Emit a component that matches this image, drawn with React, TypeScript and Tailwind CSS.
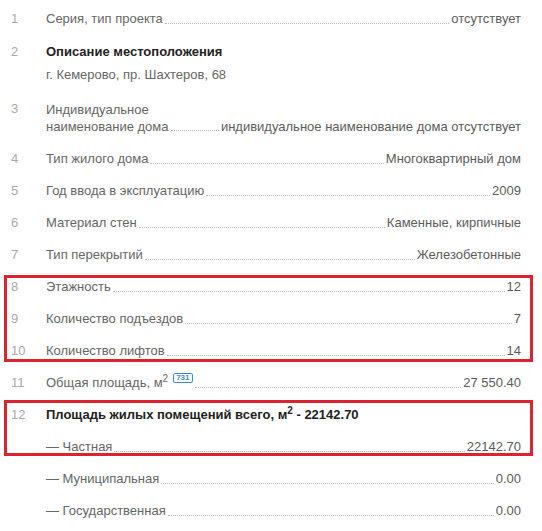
import React from "react";

type RowProps = {
  num?: string;
  label: React.ReactNode;
  value: React.ReactNode;
  labelClass?: string;
  leading?: string;
  dotsMb?: string;
};

function Row({ num, label, value, labelClass = "", leading = "leading-4", dotsMb = "mb-[3px]" }: RowProps) {
  return (
    <div className={`flex py-2 pl-[11px] pr-[21px] ${leading}`}>
      <div className="w-[35px] shrink-0 leading-4 text-[#aaaaaa]">{num}</div>
      <div className="flex min-w-0 flex-1 items-end">
        <div className={`text-[#666666] ${labelClass}`}>{label}</div>
        <div className={`mx-[2px] min-w-[8px] flex-1 border-b border-dotted border-[#b8b8b8] ${dotsMb}`} />
        <div className="whitespace-nowrap text-[#5c5c5c]">{value}</div>
      </div>
    </div>
  );
}

function Highlight({ children, top, bottom }: { children: React.ReactNode; top: string; bottom: string }) {
  return (
    <div className="relative">
      {children}
      <div className={`pointer-events-none absolute left-[4px] right-[9px] border-[3px] border-[#dc2430] ${top} ${bottom}`} />
    </div>
  );
}

export default function App() {
  return (
    <div
      className="min-h-[531px] w-[542px] bg-white pt-[3px] text-[13px]"
      style={{ fontFamily: '"Liberation Sans", Arial, sans-serif' }}
    >
      <Row num="1" label="Серия, тип проекта" value="отсутствует" />

      <div className="flex pb-[10px] pl-[11px] pr-[21px] pt-[9px] leading-4">
        <div className="w-[35px] shrink-0 text-[#aaaaaa]">2</div>
        <div className="flex flex-col">
          <div className="font-bold text-[#222222]">Описание местоположения</div>
          <div className="mt-[7px] text-[#666666]">г. Кемерово, пр. Шахтеров, 68</div>
        </div>
      </div>

      <Row
        num="3"
        label={
          <>
            Индивидуальное
            <br />
            наименование дома
          </>
        }
        labelClass="whitespace-nowrap"
        leading="leading-[17px]"
        dotsMb="mb-[4px]"
        value="индивидуальное наименование дома отсутствует"
      />
      <Row num="4" label="Тип жилого дома" value="Многоквартирный дом" />
      <Row num="5" label="Год ввода в эксплуатацию" value="2009" />
      <Row num="6" label="Материал стен" value="Каменные, кирпичные" />
      <Row num="7" label="Тип перекрытий" value="Железобетонные" />

      <Highlight top="top-[4px]" bottom="bottom-[5px]">
        <Row num="8" label="Этажность" value="12" />
        <Row num="9" label="Количество подъездов" value="7" />
        <Row num="10" label="Количество лифтов" value="14" />
      </Highlight>

      <Row
        num="11"
        label={
          <span className="whitespace-nowrap">
            Общая площадь, м<sup className="text-[10px]">2</sup>
            <span className="relative -top-[7px] ml-[5px] inline-block rounded-[2px] border border-[#3b8fd0] px-[2px] align-baseline text-[8px] font-bold leading-[8px] text-[#3b8fd0]">
              731
            </span>
          </span>
        }
        value="27 550.40"
      />

      <Highlight top="top-[1px]" bottom="bottom-[7px]">
        <div className="flex py-2 pl-[11px] pr-[21px] leading-4">
          <div className="w-[35px] shrink-0 text-[#aaaaaa]">12</div>
          <div className="font-bold text-[#222222]">
            Площадь жилых помещений всего, м<sup className="text-[10px]">2</sup> - 22142.70
          </div>
        </div>
        <Row label="— Частная" value="22142.70" />
      </Highlight>

      <Row label="— Муниципальная" value="0.00" />
      <Row label="— Государственная" value="0.00" />
    </div>
  );
}
